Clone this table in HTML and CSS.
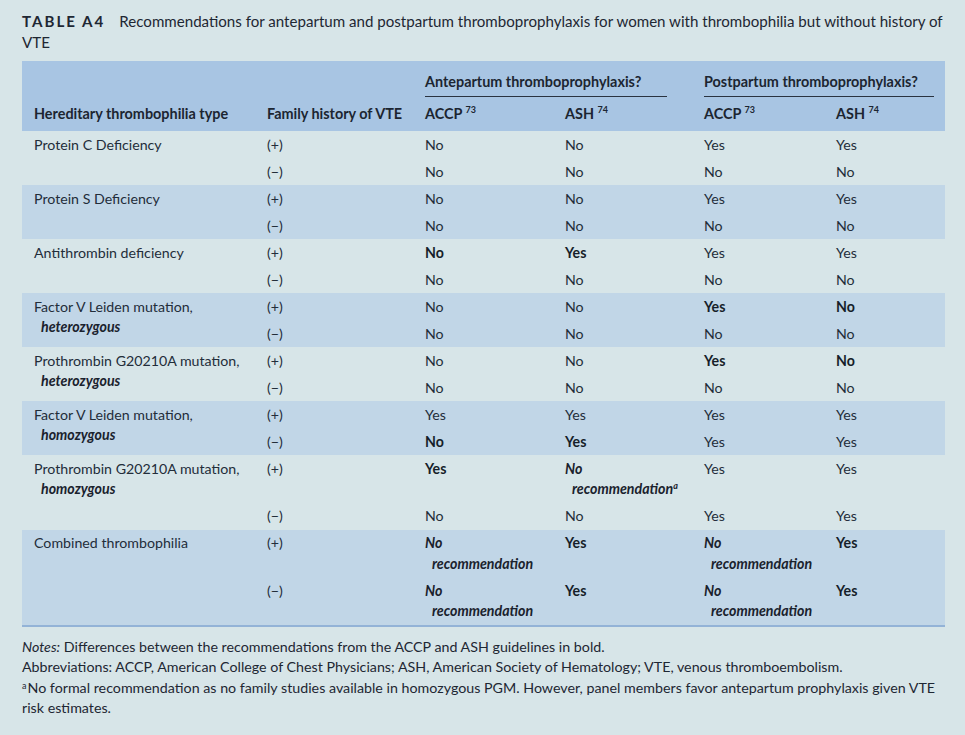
FILE: index.html
```html
<!DOCTYPE html>
<html lang="en">
<head>
<meta charset="utf-8">
<title>Table A4</title>
<link rel="stylesheet" href="styles.css">
</head>
<body>
<div class="page">
  <p class="caption"><span class="label">TABLE A4</span>Recommendations for antepartum and postpartum thromboprophylaxis for women with thrombophilia but without history of VTE</p>
  <table class="rec">
    <colgroup>
      <col class="c1"><col class="c2"><col class="c3"><col class="c4"><col class="c5"><col class="c6">
    </colgroup>
    <thead>
      <tr class="h1">
        <th></th>
        <th></th>
        <th colspan="2"><div class="span-head ante">Antepartum thromboprophylaxis?</div></th>
        <th colspan="2"><div class="span-head post">Postpartum thromboprophylaxis?</div></th>
      </tr>
      <tr class="h2">
        <th>Hereditary thrombophilia type</th>
        <th>Family history of VTE</th>
        <th>ACCP <sup>73</sup></th>
        <th>ASH <sup>74</sup></th>
        <th>ACCP <sup>73</sup></th>
        <th>ASH <sup>74</sup></th>
      </tr>
    </thead>
    <tbody>
      <tr><td rowspan="2" class="type">Protein C Deficiency</td><td>(+)</td><td>No</td><td>No</td><td>Yes</td><td>Yes</td></tr>
      <tr><td>(−)</td><td>No</td><td>No</td><td>No</td><td>No</td></tr>
    </tbody>
    <tbody class="alt">
      <tr><td rowspan="2" class="type">Protein S Deficiency</td><td>(+)</td><td>No</td><td>No</td><td>Yes</td><td>Yes</td></tr>
      <tr><td>(−)</td><td>No</td><td>No</td><td>No</td><td>No</td></tr>
    </tbody>
    <tbody>
      <tr><td rowspan="2" class="type">Antithrombin deficiency</td><td>(+)</td><td><b>No</b></td><td><b>Yes</b></td><td>Yes</td><td>Yes</td></tr>
      <tr><td>(−)</td><td>No</td><td>No</td><td>No</td><td>No</td></tr>
    </tbody>
    <tbody class="alt">
      <tr><td rowspan="2" class="type">Factor V Leiden mutation,<span class="sub">heterozygous</span></td><td>(+)</td><td>No</td><td>No</td><td><b>Yes</b></td><td><b>No</b></td></tr>
      <tr><td>(−)</td><td>No</td><td>No</td><td>No</td><td>No</td></tr>
    </tbody>
    <tbody>
      <tr><td rowspan="2" class="type">Prothrombin G20210A mutation,<span class="sub">heterozygous</span></td><td>(+)</td><td>No</td><td>No</td><td><b>Yes</b></td><td><b>No</b></td></tr>
      <tr><td>(−)</td><td>No</td><td>No</td><td>No</td><td>No</td></tr>
    </tbody>
    <tbody class="alt">
      <tr><td rowspan="2" class="type">Factor V Leiden mutation,<span class="sub">homozygous</span></td><td>(+)</td><td>Yes</td><td>Yes</td><td>Yes</td><td>Yes</td></tr>
      <tr><td>(−)</td><td><b>No</b></td><td><b>Yes</b></td><td>Yes</td><td>Yes</td></tr>
    </tbody>
    <tbody>
      <tr><td rowspan="2" class="type">Prothrombin G20210A mutation,<span class="sub">homozygous</span></td><td>(+)</td><td><b>Yes</b></td><td><i class="norec">No<span class="sub">recommendation<sup>a</sup></span></i></td><td>Yes</td><td>Yes</td></tr>
      <tr><td>(−)</td><td>No</td><td>No</td><td>Yes</td><td>Yes</td></tr>
    </tbody>
    <tbody class="alt last">
      <tr><td rowspan="2" class="type">Combined thrombophilia</td><td>(+)</td><td><i class="norec">No<span class="sub">recommendation</span></i></td><td><b>Yes</b></td><td><i class="norec">No<span class="sub">recommendation</span></i></td><td><b>Yes</b></td></tr>
      <tr><td>(−)</td><td><i class="norec">No<span class="sub">recommendation</span></i></td><td><b>Yes</b></td><td><i class="norec">No<span class="sub">recommendation</span></i></td><td><b>Yes</b></td></tr>
    </tbody>
  </table>
  <div class="notes">
    <p><i>Notes:</i> Differences between the recommendations from the ACCP and ASH guidelines in bold.</p>
    <p>Abbreviations: ACCP, American College of Chest Physicians; ASH, American Society of Hematology; VTE, venous thromboembolism.</p>
    <p><span class="fn">a</span>No formal recommendation as no family studies available in homozygous PGM. However, panel members favor antepartum prophylaxis given VTE risk estimates.</p>
  </div>
</div>
</body>
</html>
```
FILE: styles.css
```css
html, body {
  margin: 0;
  padding: 0;
  background: #d7e5e8;
}
body {
  font-family: Lato, "Open Sans", sans-serif;
  color: #232d3a;
}
.page {
  width: 923px;
  padding: 11px 0 0 22px;
}
.caption {
  margin: 0;
  font-size: 15.1px;
  line-height: 21px;
  color: #1e2733;
}
.caption .label {
  font-weight: 700;
  letter-spacing: 2px;
  margin-right: 14px;
}
.rec {
  width: 923px;
  margin-top: 8px;
  border-collapse: collapse;
  table-layout: fixed;
  font-size: 14.2px;
  line-height: 20.5px;
}
.c1 { width: 233px; }
.c2 { width: 158px; }
.c3 { width: 140px; }
.c4 { width: 139px; }
.c5 { width: 132px; }
.c6 { width: 121px; }
.rec thead {
  background: #a8c5e3;
}
.rec th {
  text-align: left;
  font-weight: 700;
  font-size: 14.4px;
  white-space: nowrap;
  color: #1c2531;
  padding: 0 12px;
}
.rec .h1 th {
  padding-top: 11px;
  padding-bottom: 0;
  vertical-align: top;
}
.rec .h1 th:nth-child(3) { padding-right: 25px; }
.rec .h1 th:nth-child(4) { padding-right: 11px; }
.span-head {
  padding-bottom: 4px;
  border-bottom: 1px solid #2a3340;
  line-height: 20px;
}
.rec .h2 th {
  padding-top: 7px;
  padding-bottom: 7px;
  line-height: 20px;
}
.rec sup {
  font-size: 9px;
  line-height: 0;
  vertical-align: 6px;
}
.rec td {
  padding: 3.75px 12px 2.75px;
  vertical-align: top;
  text-align: left;
}
.rec tbody.alt {
  background: #c1d6e7;
}
.rec tbody.last {
  border-bottom: 2px solid #93b3d7;
}
.rec b {
  font-weight: 700;
  color: #161e29;
}
.rec .sub {
  display: block;
  padding-left: 7px;
  font-style: italic;
  font-weight: 700;
  color: #1a222d;
}
.norec {
  font-weight: 700;
  color: #1a222d;
}
.norec sup {
  font-size: 9px;
  vertical-align: 5px;
}
.notes {
  margin-top: 10px;
  font-size: 14.25px;
  line-height: 20.5px;
  color: #1e2733;
}
.notes p {
  margin: 0;
}
.notes .fn {
  display: inline-block;
  font-size: 9px;
  line-height: 9px;
  vertical-align: top;
  margin-top: 3px;
  margin-right: 1px;
}
```
